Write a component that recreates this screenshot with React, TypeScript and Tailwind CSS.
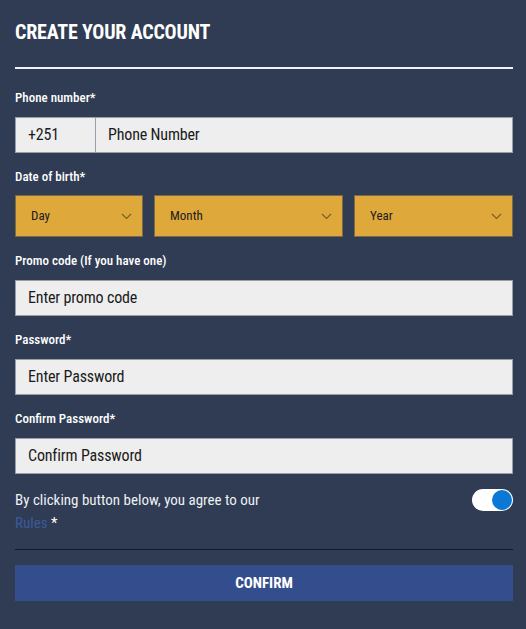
import React, { useState } from 'react';

const font = { fontFamily: '"Roboto Condensed", Roboto, "Liberation Sans", sans-serif' };

function Chevron() {
  return (
    <svg width="11" height="7" viewBox="0 0 11 7" fill="none" className="shrink-0">
      <path d="M1 1l4.5 4.5L10 1" stroke="#7a5c25" strokeWidth="1.1" />
    </svg>
  );
}

function Select({ label, className }: { label: string; className: string }) {
  return (
    <div
      className={`h-[42px] flex items-center justify-between pl-[15px] pr-[10px] bg-[#dea83b] border border-[#7c6a45] text-[13px] text-[#1c1c1c] ${className}`}
    >
      <span>{label}</span>
      <Chevron />
    </div>
  );
}

function Field({ label, placeholder }: { label: string; placeholder: string }) {
  return (
    <div className="mt-[16px]">
      <p className="text-[13px] leading-4 font-medium text-white mb-[11px]">{label}</p>
      <div className="h-[36px] flex items-center px-[12px] bg-[#eeeeee] border border-[#9a9ea6] text-[16px] text-[#1b1b1b] tracking-[-0.01em]">
        {placeholder}
      </div>
    </div>
  );
}

export default function App() {
  const [agree, setAgree] = useState(true);

  return (
    <div className="w-[526px] h-[629px] bg-[#2f3c53] pl-[15px] pr-[13px] pt-[20px]" style={font}>
      <h1 className="text-[20px] leading-6 font-bold text-white uppercase tracking-[-0.01em]">Create your account</h1>
      <div className="mt-[23px] h-[2px] bg-[#eef3fa]" />

      <p className="mt-[21px] text-[13px] leading-4 font-medium text-white mb-[11px]">Phone number*</p>
      <div className="h-[36px] flex bg-[#eeeeee] border border-[#9a9ea6] text-[16px] text-[#1b1b1b] tracking-[-0.01em]">
        <div className="w-[80px] flex items-center pl-[12px] border-r border-[#9a9ea6]">+251</div>
        <div className="flex-1 flex items-center pl-[12px]">Phone Number</div>
      </div>

      <p className="mt-[16px] text-[13px] leading-4 font-medium text-white mb-[10px]">Date of birth*</p>
      <div className="flex gap-[11px]">
        <Select label="Day" className="w-[128px]" />
        <Select label="Month" className="w-[189px]" />
        <Select label="Year" className="flex-1" />
      </div>

      <div className="mt-[1px]">
        <Field label="Promo code (If you have one)" placeholder="Enter promo code" />
      </div>
      <Field label="Password*" placeholder="Enter Password" />
      <Field label="Confirm Password*" placeholder="Confirm Password" />

      <div className="mt-[15px] flex justify-between items-start">
        <div className="text-[15px] leading-[23px] text-[#eef0f4]">
          <p>By clicking button below, you agree to our</p>
          <p>
            <span className="text-[#3b5a9c]">Rules</span> <span className="text-white">*</span>
          </p>
        </div>
        <button
          onClick={() => setAgree(!agree)}
          className={`w-[41px] h-[22px] rounded-full bg-white flex items-center px-[1px] ${agree ? 'justify-end' : 'justify-start'}`}
        >
          <span className="w-[20px] h-[20px] rounded-full bg-[#0a78d4]" />
        </button>
      </div>

      <div className="mt-[14px] h-px bg-[#121a28]" />

      <button className="mt-[15px] w-full h-[36px] bg-[#344d8d] text-white text-[15px] font-bold uppercase">
        Confirm
      </button>
    </div>
  );
}
